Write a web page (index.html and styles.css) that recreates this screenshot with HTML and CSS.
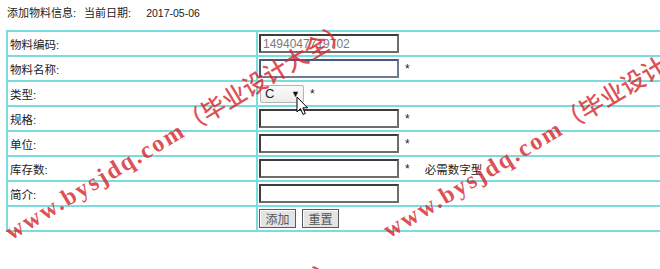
FILE: index.html
```html
<!DOCTYPE html>
<html lang="zh-CN">
<head>
<meta charset="utf-8">
<title>添加物料信息</title>
<link rel="stylesheet" href="styles.css">
</head>
<body>
<div class="page">
  <div class="header">
    <span class="title">添加物料信息:</span>
    <span class="date-label">当前日期:</span>
    <span class="date">2017-05-06</span>
  </div>
  <table class="form">
    <tr>
      <td class="label">物料编码:</td>
      <td class="value"><input class="field readonly" type="text" value="1494047719702"></td>
    </tr>
    <tr>
      <td class="label">物料名称:</td>
      <td class="value"><input class="field focus" type="text"><span class="star">*</span></td>
    </tr>
    <tr>
      <td class="label">类型:</td>
      <td class="value"><span class="select"><span>C</span><span class="arrow">▼</span></span><span class="star">*</span></td>
    </tr>
    <tr>
      <td class="label">规格:</td>
      <td class="value"><input class="field" type="text"><span class="star">*</span></td>
    </tr>
    <tr>
      <td class="label">单位:</td>
      <td class="value"><input class="field" type="text"><span class="star">*</span></td>
    </tr>
    <tr>
      <td class="label">库存数:</td>
      <td class="value"><input class="field" type="text"><span class="star">*</span><span class="hint">必需数字型</span></td>
    </tr>
    <tr>
      <td class="label">简介:</td>
      <td class="value"><input class="field" type="text"></td>
    </tr>
    <tr>
      <td class="label"></td>
      <td class="value"><span class="buttons"><button class="btn" type="button">添加</button><button class="btn" type="button">重置</button></span></td>
    </tr>
  </table>
  <svg class="cursor" width="13" height="21" viewBox="0 0 13 21"><path d="M1 1 L1 16 L4.5 12.5 L7 18.5 L9.3 17.5 L6.8 11.8 L11.5 11.8 Z" fill="#fff" stroke="#000" stroke-width="1" stroke-linejoin="miter"/></svg>
  <div class="watermarks">
    <span class="wm wm1"><span class="lat">www.bysjdq.com</span><span class="cjk">（毕业设计大全）</span></span>
    <span class="wm wm2"><span class="lat">www.bysjdq.com</span><span class="cjk">（毕业设计大全）</span></span>
    <span class="wm wm3"><span class="lat">www.bysjdq.com</span><span class="cjk">（毕业设计大全）</span></span>
  </div>
</div>
</body>
</html>
```

FILE: styles.css
```css
html, body {
  margin: 0;
  padding: 0;
  background: #fff;
  overflow: hidden;
}

.page {
  position: relative;
  width: 660px;
  height: 269px;
  overflow: hidden;
  padding: 6px 0 0 6px;
  box-sizing: border-box;
  font-family: "Liberation Sans", "Noto Sans CJK SC", sans-serif;
  font-size: 11.5px;
  color: #222;
}

.header {
  display: flex;
  align-items: center;
  height: 14px;
  line-height: 14px;
  padding-left: 1px;
  margin-bottom: 10px;
  font-size: 11px;
}

.title { margin-right: 8px; }
.date-label { margin-right: 15px; }
.date { font-size: 10.5px; }

.form {
  border-collapse: collapse;
  width: 720px;
}

.form td {
  border: 2px solid #7adcdc;
  height: 23px;
  padding: 0;
  vertical-align: middle;
  white-space: nowrap;
}

.form td.label {
  width: 246px;
  padding-left: 2px;
}

.form td.value {
  padding-left: 1px;
}

.field {
  box-sizing: border-box;
  width: 140px;
  height: 19px;
  margin: 0;
  padding: 0 2px;
  border: 2px solid;
  border-color: #3c3c3c #6d6d6d #6d6d6d #3c3c3c;
  background: #fff;
  font-family: "Liberation Sans", sans-serif;
  font-size: 12px;
  vertical-align: middle;
}

.field.readonly { color: #7a7a7a; }
.field.focus { border-color: #46587a #6c7c98 #6c7c98 #46587a; }

.star {
  display: inline-block;
  margin-left: 6px;
  vertical-align: middle;
  font-size: 12px;
}

.hint {
  display: inline-block;
  margin-left: 15px;
  vertical-align: middle;
}

.select {
  display: inline-flex;
  align-items: center;
  justify-content: space-between;
  box-sizing: border-box;
  width: 44px;
  height: 18px;
  margin-left: 1px;
  padding: 0 3px 0 4px;
  border: 1px solid #b4b4b4;
  border-radius: 2px;
  background: linear-gradient(#fbfbfb, #ececec);
  vertical-align: middle;
  font-size: 13px;
}

.select .arrow {
  font-size: 9px;
  color: #111;
}

.buttons {
  display: inline-flex;
  gap: 6px;
  vertical-align: middle;
}

.btn {
  box-sizing: border-box;
  width: 37px;
  height: 19px;
  margin: 0;
  padding: 0;
  border: 1px solid #5a5a5a;
  box-shadow: inset 1px 1px 0 #fff;
  background: #e4e4e4;
  color: #555;
  font-family: "Noto Sans CJK SC", sans-serif;
  font-size: 12px;
  line-height: 16px;
}

.cursor {
  position: absolute;
  left: 296px;
  top: 96px;
}

.watermarks {
  position: absolute;
  left: 0;
  top: 0;
  width: 660px;
  height: 269px;
  overflow: hidden;
  pointer-events: none;
}

.wm {
  position: absolute;
  display: block;
  white-space: nowrap;
  line-height: 26px;
  height: 26px;
  transform-origin: 0 50%;
  transform: rotate(-31deg);
  color: rgba(214, 40, 48, 0.82);
  font-size: 24px;
  font-weight: bold;
}

.wm .lat {
  font-family: "Liberation Serif", serif;
  letter-spacing: 2.2px;
}

.wm .cjk {
  font-family: "Noto Sans CJK SC", sans-serif;
  font-weight: 500;
  font-size: 24px;
}

.wm1 { left: 6px; top: 219px; }
.wm2 { left: 384px; top: 217px; }
.wm3 { left: -4px; top: 456px; }
```
